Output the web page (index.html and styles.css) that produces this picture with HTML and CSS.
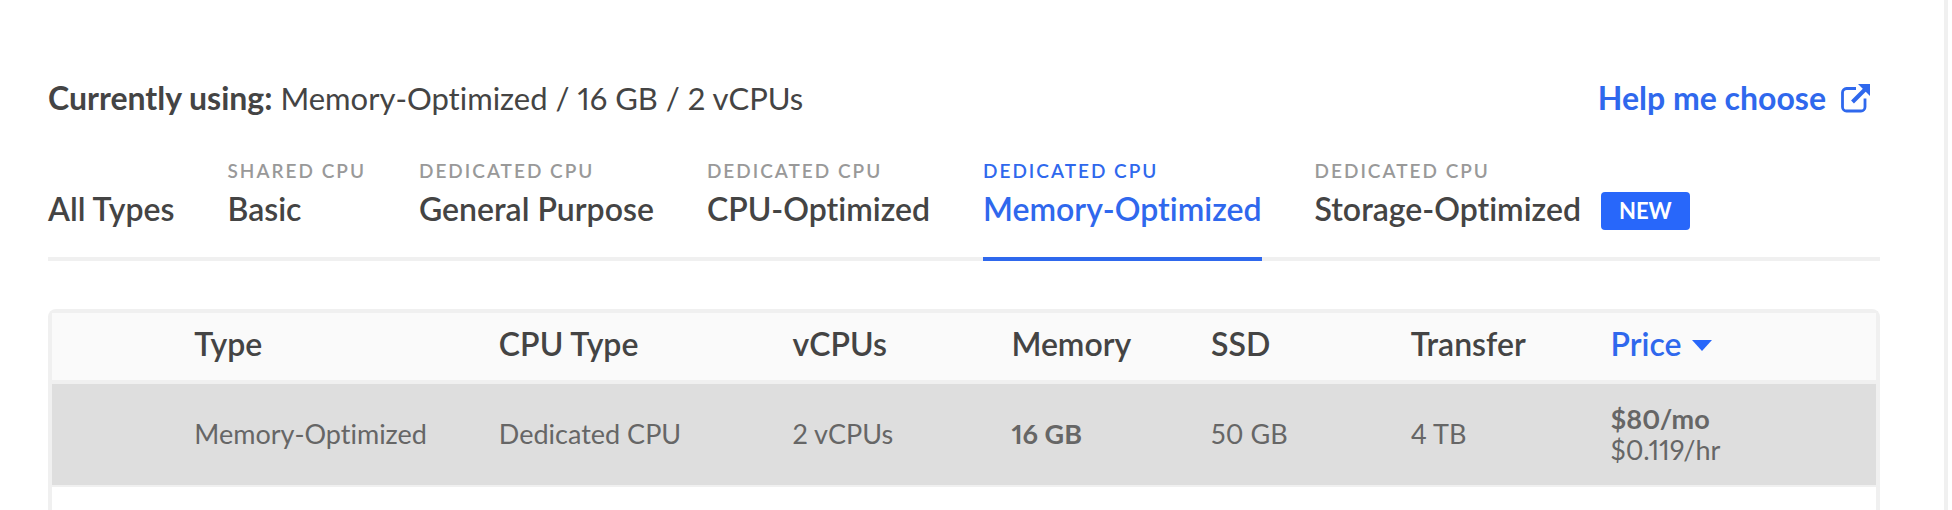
FILE: index.html
```
<!DOCTYPE html>
<html lang="en">
<head>
  <meta charset="UTF-8" />
  <meta name="viewport" content="width=device-width, initial-scale=1" />
  <title>Resize Droplet</title>
  <link rel="stylesheet" href="styles.css">
</head>
<body>
<main class="panel">
  <header class="top">
    <p class="current"><strong>Currently using:</strong> Memory-Optimized / 16 GB / 2 vCPUs</p>
    <a href="#help" class="help">Help me choose
      <svg class="help-icon" viewBox="0 0 29 29" aria-hidden="true">
        <path d="M15 4.5H5.5a4 4 0 0 0-4 4V23a4 4 0 0 0 4 4H20a4 4 0 0 0 4-4v-8.5" fill="none" stroke="currentColor" stroke-width="2.8"/>
        <path d="M11.5 18L24 5.5" fill="none" stroke="currentColor" stroke-width="4"/>
        <path d="M17 0h12v12z" fill="currentColor"/>
      </svg>
    </a>
  </header>

  <nav class="tabs">
    <button type="button" class="tab"><span class="name">All Types</span></button>
    <button type="button" class="tab"><span class="kind">SHARED CPU</span><span class="name">Basic</span></button>
    <button type="button" class="tab"><span class="kind">DEDICATED CPU</span><span class="name">General Purpose</span></button>
    <button type="button" class="tab"><span class="kind">DEDICATED CPU</span><span class="name">CPU-Optimized</span></button>
    <button type="button" class="tab active"><span class="kind">DEDICATED CPU</span><span class="name">Memory-Optimized</span></button>
    <button type="button" class="tab"><span class="kind">DEDICATED CPU</span><span class="name">Storage-Optimized <span class="badge">NEW</span></span></button>
  </nav>

  <div class="plans">
    <table>
      <colgroup>
        <col class="c-pick"><col class="c-type"><col class="c-cpu"><col class="c-vcpus"><col class="c-std"><col class="c-std"><col class="c-std"><col>
      </colgroup>
      <thead>
        <tr>
          <td></td>
          <th>Type</th>
          <th>CPU Type</th>
          <th>vCPUs</th>
          <th>Memory</th>
          <th>SSD</th>
          <th>Transfer</th>
          <th><button type="button" class="sort">Price <span class="caret"></span></button></th>
        </tr>
      </thead>
      <tbody>
        <tr>
          <td></td>
          <td>Memory-Optimized</td>
          <td>Dedicated CPU</td>
          <td>2 vCPUs</td>
          <td><strong>16 GB</strong></td>
          <td>50 GB</td>
          <td>4 TB</td>
          <td><strong class="monthly">$80/mo</strong>$0.119/hr</td>
        </tr>
      </tbody>
    </table>
  </div>
</main>
</body>
</html>
```
FILE: styles.css
```
*{box-sizing:border-box;}
body{margin:0;background:#fff;color:#444;font-family:Lato,'Liberation Sans',sans-serif;font-variant-ligatures:none;font-variant-numeric:proportional-nums;}
button{font:inherit;color:inherit;background:none;border:0;padding:0;cursor:pointer;}
.panel{min-height:100vh;margin-right:4px;padding:76px 64px 0 48px;border-right:4px solid #f0f0f0;}
.top{display:flex;justify-content:space-between;align-items:center;height:44px;padding-right:10px;font-size:31px;line-height:44px;}
.current{margin:0;}
.current strong,.help{font-size:32px;}
.help{display:flex;align-items:center;gap:15px;color:#2f68ed;font-weight:700;text-decoration:none;}
.help-icon{width:29px;height:29px;}

.tabs{display:flex;align-items:stretch;gap:53px;height:101px;margin-top:40px;border-bottom:4px solid #f0f0f0;}
.tab{display:flex;flex-direction:column;justify-content:flex-end;align-items:flex-start;margin-bottom:-4px;padding-bottom:28px;border-bottom:4px solid transparent;font-size:32px;font-weight:600;line-height:40px;white-space:nowrap;}
.kind{margin-bottom:6px;color:#999;font-size:19px;line-height:24px;letter-spacing:2px;}
.name{display:flex;align-items:center;height:40px;}
.active,.active .kind{color:#2f68ed;}
.active{border-bottom-color:#2f68ed;}
.badge{margin:4px 0 0 20px;padding:0 18px;border-radius:4px;background:#2867fa;color:#fff;font-size:22px;font-weight:700;line-height:38px;}

.plans{min-height:201px;margin-top:48px;border:4px solid #f0f0f0;border-bottom:0;border-radius:8px 8px 0 0;}
table{width:100%;table-layout:fixed;border-spacing:0;}
.c-pick{width:7.8%;}
.c-type{width:16.7%;}
.c-cpu{width:16.1%;}
.c-vcpus{width:12%;}
.c-std{width:10.95%;}
th,td{padding:0;text-align:left;}
thead th,thead td{height:71px;padding-bottom:6px;background:#fafafa;border-bottom:4px solid #f0f0f0;}
th{font-size:32px;font-weight:600;line-height:40px;}
tbody td{height:103px;padding-bottom:2px;background:#dedede;border-bottom:2px solid #f0f0f0;color:#666;font-size:27px;line-height:31px;}
.monthly{display:block;}
.sort{display:flex;align-items:center;gap:10px;color:#2f68ed;}
.caret{margin-top:4px;border:10px solid transparent;border-top:11px solid #2867fa;border-bottom:0;}
```
